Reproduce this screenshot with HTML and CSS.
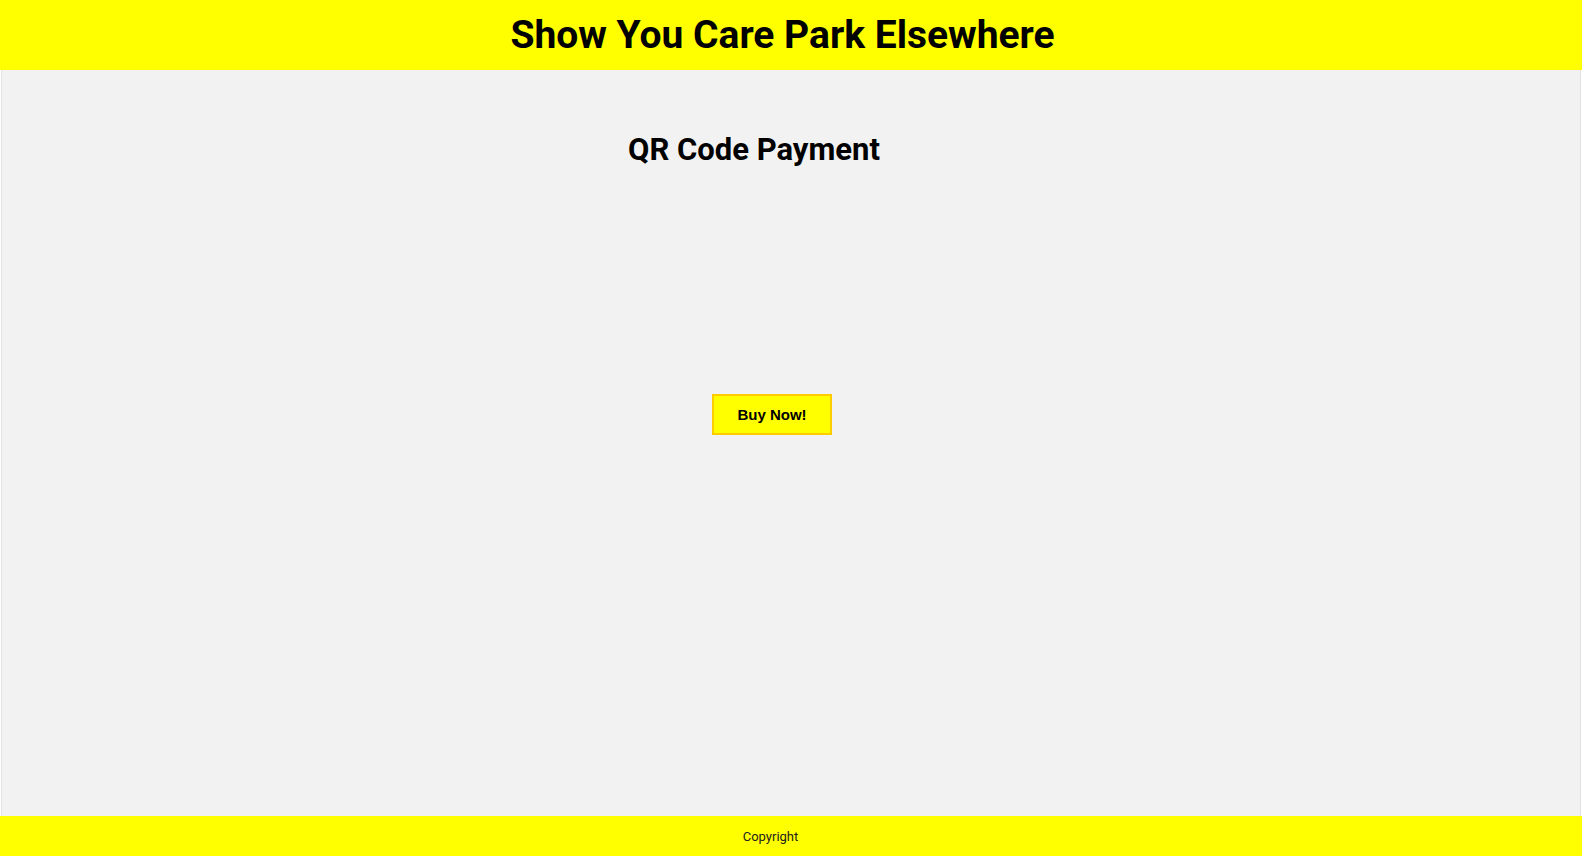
FILE: index.html
```html
<!DOCTYPE html>
<html lang="en">
<head>
<meta charset="utf-8">
<title>Show You Care Park Elsewhere</title>
<link rel="stylesheet" href="styles.css">
</head>
<body>
<header class="site-header">
  <h1 class="site-title">Show You Care Park Elsewhere</h1>
</header>
<main class="content">
  <h2 class="page-title">QR Code Payment</h2>
  <div class="actions">
    <button class="buy-btn" type="button">Buy Now!</button>
  </div>
</main>
<footer class="site-footer">Copyright</footer>
</body>
</html>
```
FILE: styles.css
```css
html, body {
  margin: 0;
  padding: 0;
  background: #ffffff;
  font-family: Roboto, "Liberation Sans", Arial, sans-serif;
  color: #000;
}

.site-header {
  background: #ffff00;
  height: 70px;
  box-sizing: border-box;
  padding: 12px 17px 0 0;
  text-align: center;
}

.site-title {
  margin: 0;
  font-size: 39px;
  font-weight: 700;
  line-height: normal;
}

.content {
  height: 746px;
  box-sizing: border-box;
  margin: 0 1px;
  background: #f2f2f2;
  border-left: 1px solid #e2e2e2;
  border-right: 1px solid #e2e2e2;
  padding-top: 61px;
}

.page-title {
  margin: 0;
  padding-right: 74px;
  text-align: center;
  font-size: 31px;
  font-weight: 700;
  line-height: normal;
}

.actions {
  margin-top: 226px;
  padding-right: 38px;
  text-align: center;
}

.buy-btn {
  width: 120px;
  height: 41px;
  background: #ffff00;
  border: 2px solid #ffcc00;
  font-family: "Liberation Sans", Arial, sans-serif;
  font-size: 15px;
  font-weight: 700;
  color: #000;
  padding: 0;
  cursor: pointer;
}

.site-footer {
  background: #ffff00;
  height: 40px;
  line-height: 42px;
  text-align: center;
  padding-right: 41px;
  font-size: 13px;
  color: #222;
  font-family: Roboto, "Liberation Sans", Arial, sans-serif;
}
```
